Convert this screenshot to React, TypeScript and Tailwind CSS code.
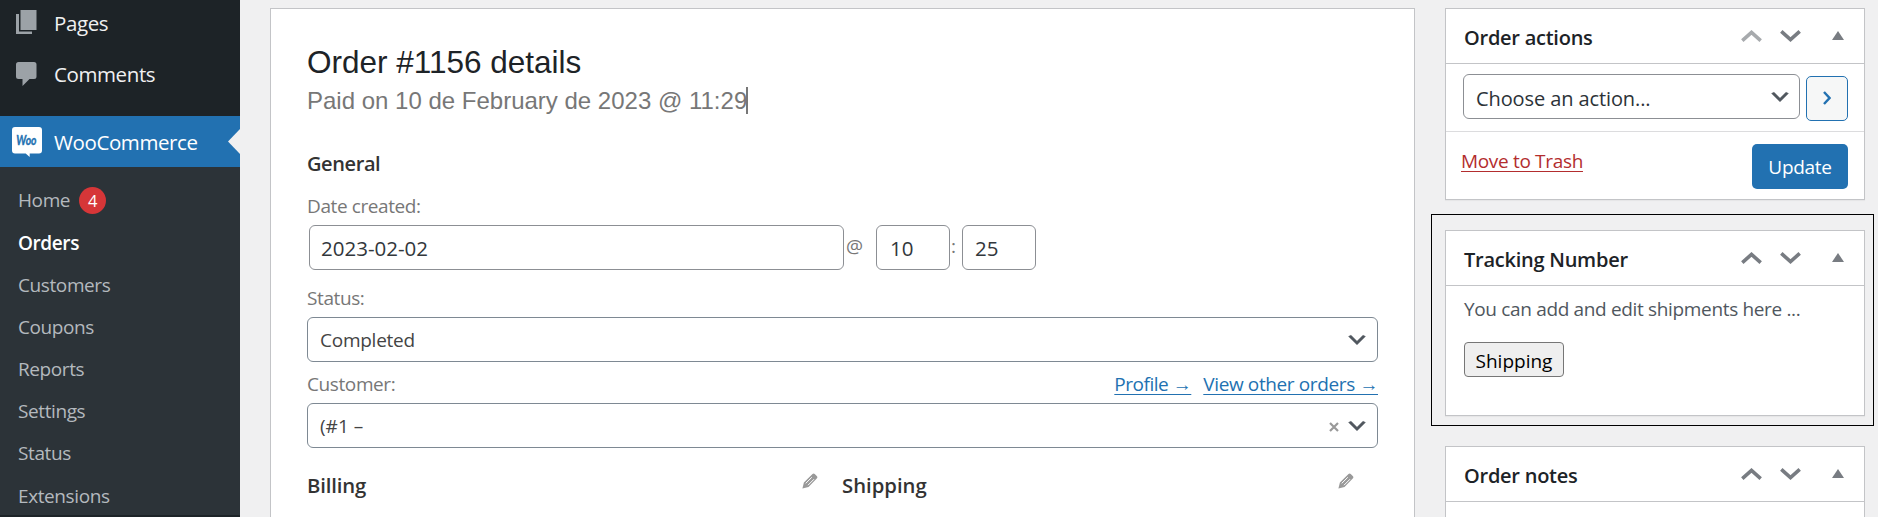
import type { ReactNode } from "react";

const SUBMENU = ["Customers", "Coupons", "Reports", "Settings", "Status", "Extensions"];

function SelectArrow() {
  return (
    <svg viewBox="0 0 20 20" className="h-6 w-6 shrink-0" aria-hidden="true">
      <path d="M5 6l5 5 5-5 2 1-7 7-7-7 2-1z" fill="#50575e" stroke="#50575e" strokeWidth="0.4" />
    </svg>
  );
}

function Chevron({ up = false, faded = false }: { up?: boolean; faded?: boolean }) {
  return (
    <svg viewBox="0 0 21 12" className="h-3 w-[21px] shrink-0" aria-hidden="true">
      <path
        d={up ? "M1.3 10.6 10.5 2.4l9.2 8.2" : "M1.3 1.4l9.2 8.2 9.2-8.2"}
        fill="none"
        stroke={faded ? "#a7aaad" : "#787c82"}
        strokeWidth="3.6"
      />
    </svg>
  );
}

function Pencil() {
  return (
    <svg viewBox="0 0 16 16" className="h-4 w-4 shrink-0" aria-hidden="true">
      <path d="M.4 15.5 1.9 9.6 10.500 1Q11.700 0 12.700 1l2.300 2.300q.9 1 0 2L6.500 13.900z" fill="#999" />
      <path d="M3.700 10.400 9.800 4.300M6 12.200l6-6" stroke="#fff" strokeWidth="1" fill="none" />
    </svg>
  );
}

function PanelHeader({ title, first = false }: { title: string; first?: boolean }) {
  return (
    <div className="flex h-[55px] items-center border-b border-[#c3c4c7] pr-5 pl-[18px]">
      <h2 className="flex-1 pt-[3px] text-[20px] font-semibold tracking-[-0.25px] text-[#1d2327]">{title}</h2>
      <div className="flex items-center">
        <Chevron up faded={first} />
        <div className="ml-[18px] flex">
          <Chevron />
        </div>
        <svg viewBox="0 0 12 9" className="mb-px ml-[31px] h-[9px] w-3" aria-hidden="true">
          <path d="M6 0l6 9H0z" fill="#787c82" />
        </svg>
      </div>
    </div>
  );
}

function Label({ children }: { children: ReactNode }) {
  return <div className="text-[19px] leading-6 tracking-[-0.4px] text-[#777]">{children}</div>;
}

function Sidebar() {
  return (
    <aside className="flex w-60 shrink-0 flex-col bg-[#1d2327] text-[20.5px] tracking-[-0.4px] text-[#f0f0f1]">
      <div className="-mt-[3px] flex h-[51px] shrink-0 items-center pl-4">
        <svg viewBox="0 0 22 24" className="mt-[-1px] mr-4 h-6 w-[22px]" aria-hidden="true">
          <path d="M0 4h3v17.500h13V24H0z" fill="#9ca2a7" />
          <path d="M4.500 0h16v20h-16z" fill="#9ca2a7" />
        </svg>
        <span className="pt-0.5">Pages</span>
      </div>
      <div className="flex h-[51px] shrink-0 items-center pl-4">
        <svg viewBox="0 0 22 24" className="mr-4 h-6 w-[22px]" aria-hidden="true">
          <path d="M2.500 0h15.500q2.500 0 2.500 2.500v12q0 2.500-2.500 2.500h-4.500L6.500 24v-7h-4Q0 17 0 14.500v-12Q0 0 2.500 0z" fill="#9ca2a7" />
        </svg>
        <span className="pt-0.5">Comments</span>
      </div>
      <div className="mt-[17px] flex h-[51px] shrink-0 items-center bg-[#2271b1] pl-3 text-white">
        <svg viewBox="0 0 30 30" className="mr-3 h-[30px] w-[30px] overflow-visible" aria-hidden="true">
          <path d="M3 0h24q3 0 3 3v20.500q0 3-3 3h-9.300V30l-4-3.500H3q-3 0-3-3V3q0-3 3-3z" fill="#fff" />
          <text
            transform="translate(4.200 18) scale(0.74 1)"
            fontFamily="Lato, sans-serif"
            fontSize="14"
            fontWeight="700"
            fontStyle="italic"
            letterSpacing="0"
            fill="#2271b1"
            stroke="#2271b1"
            strokeWidth="0.4"
          >
            Woo
          </text>
        </svg>
        <span className="flex-1 pt-0.5">WooCommerce</span>
        <svg viewBox="0 0 12 24" preserveAspectRatio="none" className="h-[25px] w-3" aria-hidden="true">
          <path d="M12 0v24L0 12z" fill="#f0f0f1" />
        </svg>
      </div>
      <nav className="bg-[#2c3338] pt-3 pl-[18px] text-[19px] tracking-[-0.4px] text-[#b4b9be]">
        <div className="flex h-[42.200px] items-center">
          Home
          <span className="mt-px ml-[9px] flex h-[27px] w-[27px] items-center justify-center rounded-full bg-[#d63638] pt-px text-[16.500px] text-white">
            4
          </span>
        </div>
        <div className="flex h-[42.200px] items-center pt-px font-semibold text-white">Orders</div>
        {SUBMENU.map((name) => (
          <div key={name} className="flex h-[42.200px] items-center pt-px last:h-[41px] last:pt-[2px]">
            {name}
          </div>
        ))}
      </nav>
    </aside>
  );
}

function OrderDetails() {
  return (
    <main className="mt-2 ml-[30px] flex w-[1145px] shrink-0 flex-col border border-b-0 border-[#c3c4c7] bg-white pt-[33px] pr-9 pl-9">
      <h1 className="font-['Liberation_Sans',sans-serif] text-[31.500px] leading-10 text-[#1d2327]">Order #1156 details</h1>
      <p className="mt-[5px] flex items-start font-['Liberation_Sans',sans-serif] text-[24px] leading-7 text-[#777]">
        Paid on 10 de February de 2023 @ 11:29
        <span className="-ml-[1px] h-[27px] w-0.5 bg-[#777]" />
      </p>
      <h3 className="mt-[34px] text-[20px] leading-[30px] font-semibold tracking-[-0.4px] text-[#333]">General</h3>
      <div className="mt-[15px]">
        <Label>Date created:</Label>
      </div>
      <div className="mt-[7px] ml-px flex h-[45px] items-center text-[20.500px] text-[#32373c]">
        <div className="ml-px flex h-[45px] w-[535px] items-center rounded-[6px] border border-[#8c8f94] pt-0.5 pl-[11px]">2023-02-02</div>
        <span className="ml-[2px] w-[30px] pb-[3px] text-[19px] text-[#777]">@</span>
        <div className="flex h-[45px] w-[74px] items-center rounded-[6px] border border-[#8c8f94] pt-0.5 pl-[13px]">10</div>
        <span className="w-3 pb-[3px] pl-px text-[19px] text-[#777]">:</span>
        <div className="flex h-[45px] w-[74px] items-center rounded-[6px] border border-[#8c8f94] pt-0.5 pl-3">25</div>
      </div>
      <div className="mt-4">
        <Label>Status:</Label>
      </div>
      <div className="mt-[7px] flex h-[45px] items-center justify-between rounded-[6px] border border-[#7e8993] pr-2 pl-3 text-[19px] tracking-[-0.250px] text-[#444]">
        <span className="pt-px">Completed</span>
        <SelectArrow />
      </div>
      <div className="mt-[10px] flex justify-between">
        <Label>Customer:</Label>
        <div className="flex gap-3 text-[19px] leading-6 text-[#2271b1]">
          <a className="tracking-[-0.470px] underline decoration-1 underline-offset-[3px]">Profile →</a>
          <a className="tracking-[-0.380px] underline decoration-1 underline-offset-[3px]">View other orders →</a>
        </div>
      </div>
      <div className="mt-[7px] flex h-[45px] items-center rounded-[6px] border border-[#7e8993] pr-2 pl-3 text-[19px] text-[#444]">
        <span className="flex-1 pt-px">(#1 –</span>
        <svg viewBox="0 0 10 10" className="mr-[6px] mt-[2px] h-[10px] w-[10px]" aria-hidden="true">
          <path d="M1 1l8 8M9 1L1 9" stroke="#999" strokeWidth="2.200" />
        </svg>
        <SelectArrow />
      </div>
      <div className="mt-[22px] flex text-[20.300px] leading-[30px] font-semibold text-[#333]">
        <div className="flex w-[535px] justify-between pr-[24px]">
          <span className="tracking-[-0.150px]">Billing</span>
          <div className="pt-[3px]">
            <Pencil />
          </div>
        </div>
        <div className="flex w-[536px] justify-between pr-[24px]">
          Shipping
          <div className="pt-[3px]">
            <Pencil />
          </div>
        </div>
      </div>
    </main>
  );
}

function SidePanels() {
  return (
    <section className="mt-2 ml-4 flex w-[443px] shrink-0 flex-col">
      <div className="mr-[9px] ml-[14px] h-48 shrink-0 border border-[#c3c4c7] bg-white shadow-[0_1px_1px_rgba(0,0,0,0.04)]">
        <PanelHeader title="Order actions" first />
        <div className="flex h-[68px] border-b border-[#dcdcde] pt-[10px] pl-[17px]">
          <div className="flex h-[45px] w-[337px] items-center justify-between rounded-[6px] border border-[#8c8f94] pr-[7px] pl-3 text-[20px] tracking-[-0.100px] text-[#2c3338]">
            <span className="pt-[4px]">Choose an action...</span>
            <SelectArrow />
          </div>
          <div className="mt-[2px] ml-[6px] flex h-[45px] w-[42px] items-center justify-center rounded-[5px] border border-[#2271b1] bg-[#f6f7f7]">
            <svg viewBox="0 0 8 14" className="mb-px h-[14px] w-2" aria-hidden="true">
              <path d="M1 1l5.500 6L1 13" fill="none" stroke="#2271b1" strokeWidth="2.400" />
            </svg>
          </div>
        </div>
        <div className="flex justify-between pt-3 pr-4 pl-[15px] text-[19px]">
          <a className="mt-[5px] leading-6 tracking-[-0.330px] text-[#b32d2e] underline decoration-1 underline-offset-[3px]">Move to Trash</a>
          <div className="flex h-[45px] w-24 items-center justify-center rounded-[5px] bg-[#2271b1] pt-0.5 tracking-[-0.300px] text-white">Update</div>
        </div>
      </div>
      <div className="mt-[14px] h-[212px] shrink-0 border border-black pt-[15px] pr-2 pl-[13px]">
        <div className="h-[186px] border border-[#c3c4c7] bg-white shadow-[0_1px_1px_rgba(0,0,0,0.04)]">
          <PanelHeader title="Tracking Number" />
          <p className="mt-[11px] ml-[18px] text-[19px] leading-6 tracking-[-0.340px] text-[#50575e]">You can add and edit shipments here ...</p>
          <div className="mt-[21px] ml-[18px] flex h-[35px] w-[100px] items-center justify-center rounded-[4px] border border-[#767676] bg-[#efefef] pt-[3px] text-[19px] text-black">
            Shipping
          </div>
        </div>
      </div>
      <div className="mt-5 mr-[9px] ml-[14px] h-20 shrink-0 border border-[#c3c4c7] bg-white">
        <PanelHeader title="Order notes" />
      </div>
    </section>
  );
}

export default function App() {
  return (
    <div className="flex h-[517px] w-[1878px] overflow-hidden bg-[#f0f0f1] font-['Open_Sans','Noto_Sans',sans-serif]">
      <Sidebar />
      <OrderDetails />
      <SidePanels />
    </div>
  );
}
